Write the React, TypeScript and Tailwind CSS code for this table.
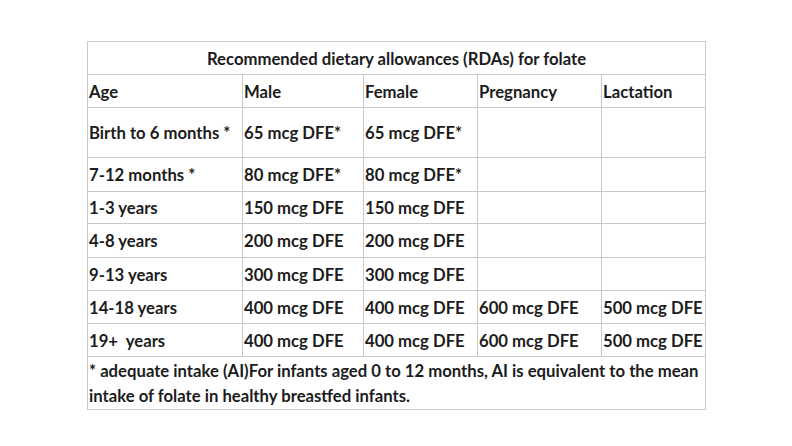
const rows: [string, string, string, string, string, string][] = [
  ["Birth to 6 months *", "65 mcg DFE*", "65 mcg DFE*", "", "", "h-[50px]"],
  ["7-12 months *", "80 mcg DFE*", "80 mcg DFE*", "", "", "h-[34px]"],
  ["1-3 years", "150 mcg DFE", "150 mcg DFE", "", "", "h-[32px]"],
  ["4-8 years", "200 mcg DFE", "200 mcg DFE", "", "", "h-[34px]"],
  ["9-13 years", "300 mcg DFE", "300 mcg DFE", "", "", "h-[33px]"],
  ["14-18 years", "400 mcg DFE", "400 mcg DFE", "600 mcg DFE", "500 mcg DFE", "h-[33px]"],
  ["19+  years", "400 mcg DFE", "400 mcg DFE", "600 mcg DFE", "500 mcg DFE", "h-[33px]"],
];

const cell = "border border-[#c9c9c9] px-[1px] pt-[3px] pb-0 align-middle whitespace-pre";

export default function App() {
  return (
    <div className="min-h-screen w-full bg-white pt-[41px] pl-[87px] font-['Lato',sans-serif] text-[16.7px] font-bold text-[#1c1c1c]">
      <table className="table-fixed border-collapse w-[618px]">
        <colgroup>
          <col className="w-[155px]" />
          <col className="w-[121px]" />
          <col className="w-[114px]" />
          <col className="w-[124px]" />
          <col className="w-[104px]" />
        </colgroup>
        <tbody>
          <tr className="h-[33px]">
            <td colSpan={5} className={`${cell} text-center`}>
              Recommended dietary allowances (RDAs) for folate
            </td>
          </tr>
          <tr className="h-[33px]">
            <td className={cell}>Age</td>
            <td className={cell}>Male</td>
            <td className={cell}>Female</td>
            <td className={cell}>Pregnancy</td>
            <td className={cell}>Lactation</td>
          </tr>
          {rows.map((r) => (
            <tr key={r[0]} className={r[5]}>
              <td className={cell}>{r[0]}</td>
              <td className={cell}>{r[1]}</td>
              <td className={cell}>{r[2]}</td>
              <td className={cell}>{r[3]}</td>
              <td className={cell}>{r[4]}</td>
            </tr>
          ))}
          <tr className="h-[50px]">
            <td colSpan={5} className="border border-[#c9c9c9] px-[1px] pt-[2px] pb-0 align-middle leading-[25px]">
              * adequate intake (AI)For infants aged 0 to 12 months, AI is equivalent to the mean intake of folate in
              healthy breastfed infants.
            </td>
          </tr>
        </tbody>
      </table>
    </div>
  );
}
